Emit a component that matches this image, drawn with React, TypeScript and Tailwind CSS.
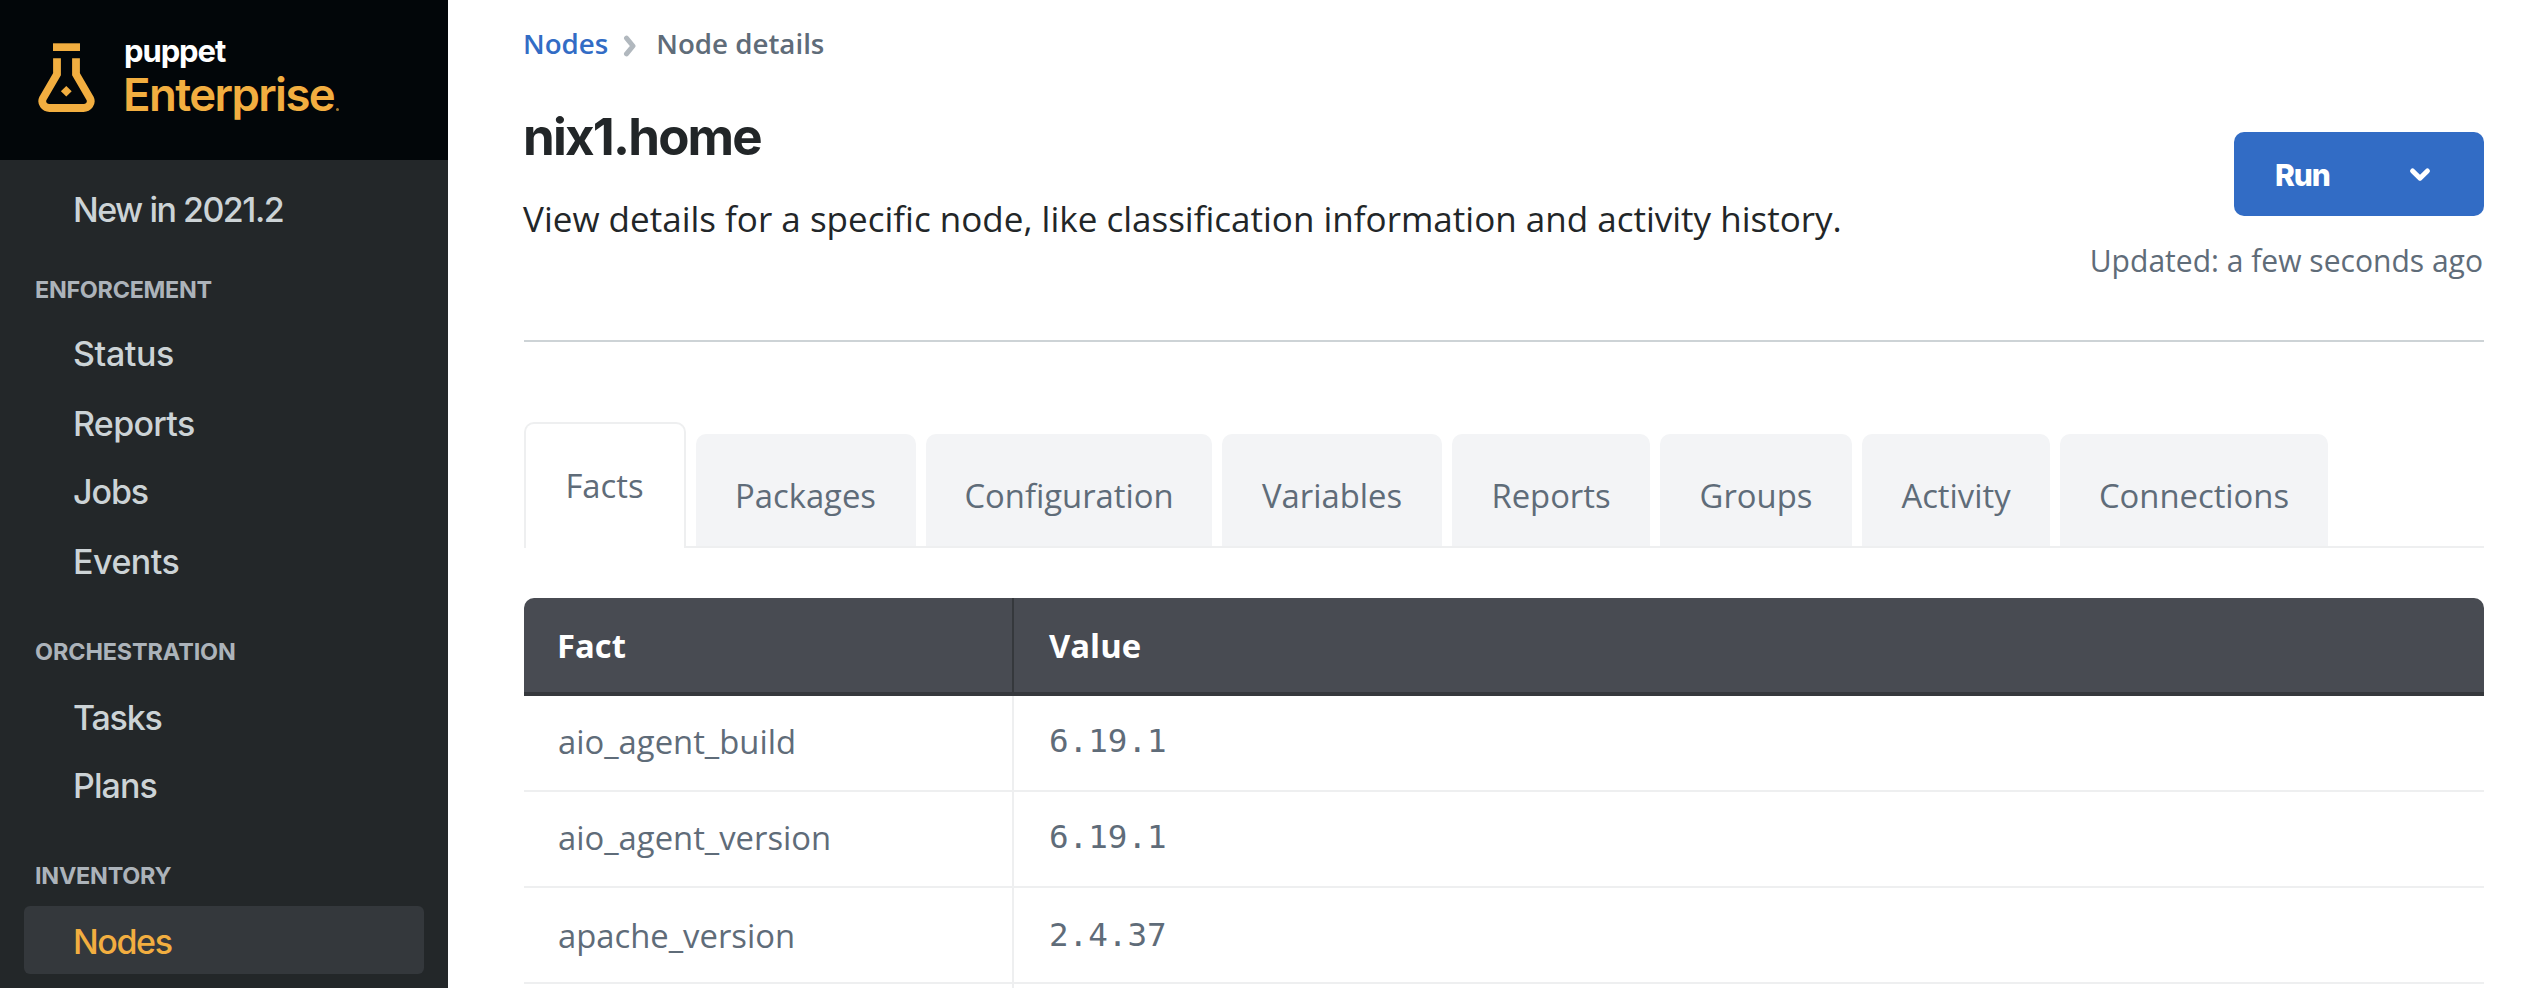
type NavItem = { label: string; className?: string; active?: boolean };
type NavGroup = { title: string; className: string; titleClass: string; items: NavItem[] };

const groups: NavGroup[] = [
  {
    title: "ENFORCEMENT",
    className: "mt-[33px]",
    titleClass: "mb-[13px] tracking-[-0.3px]",
    items: [
      { label: "Status", className: "mb-0.5 tracking-[-0.4px]" },
      { label: "Reports", className: "tracking-[-0.7px]" },
      { label: "Jobs", className: "mb-0.5 tracking-[-1.1px]" },
      { label: "Events", className: "tracking-[-0.5px]" },
    ],
  },
  {
    title: "ORCHESTRATION",
    className: "mt-[43px]",
    titleClass: "mb-[15px] tracking-[-0.1px]",
    items: [
      { label: "Tasks", className: "tracking-[-1.2px]" },
      { label: "Plans", className: "tracking-[-0.9px]" },
    ],
  },
  {
    title: "INVENTORY",
    className: "mt-[43px]",
    titleClass: "mb-[15px] tracking-[-0.25px]",
    items: [{ label: "Nodes", className: "tracking-[-1.4px]", active: true }],
  },
];

const tabs = [
  { label: "Packages", className: "w-[220px] pr-px" },
  { label: "Configuration", className: "w-[286px]" },
  { label: "Variables", className: "w-[220px]" },
  { label: "Reports", className: "w-[198px]" },
  { label: "Groups", className: "w-[192px]" },
  { label: "Activity", className: "w-[188px]" },
  { label: "Connections", className: "w-[268px]" },
];

const facts = [
  { name: "aio_agent_build", value: "6.19.1", className: "" },
  { name: "aio_agent_version", value: "6.19.1", className: "" },
  { name: "apache_version", value: "2.4.37", className: "pt-0.5" },
];

function FlaskLogo() {
  return (
    <svg viewBox="38 43 58 70" className="h-[70px] w-[58px]" fill="none">
      <path d="M53 43.3H80V51H53Z" fill="#f2ae40" />
      <path
        d="M57 58.2V74.3L43 98.2C40.6 103.3 44.6 108 49.5 108H83.5C88.4 108 92.4 103.3 90 98.2L76 74.3V58.2"
        stroke="#f2ae40"
        strokeWidth="7.8"
      />
      <path d="M66.3 86L71.7 91.3L66.3 96.6L60.9 91.3Z" fill="#f2ae40" />
    </svg>
  );
}

function NavLink({ label, className = "", active }: NavItem) {
  return (
    <a
      className={`block h-[68px] rounded-md pl-[49px] text-[34px] leading-[71px] font-medium ${
        active ? "bg-[#34383c] text-[#f2ae40]" : "text-[#ccd3d6]"
      } ${className}`}
    >
      {label}
    </a>
  );
}

function Sidebar() {
  return (
    <aside className="w-[448px] shrink-0 bg-[#232729] font-['Inter',sans-serif]">
      <div className="flex h-40 bg-[#020609] pl-[38px]">
        <div className="pt-[43px]">
          <FlaskLogo />
        </div>
        <div className="ml-7 pt-8">
          <div className="text-[31px] leading-[38px] font-bold tracking-[-1.1px] text-white">puppet</div>
          <div className="-ml-px flex text-[45.5px] leading-[50px] font-semibold tracking-[-1.6px] text-[#f2ae40]">
            Enterprise
            <span className="mt-[38px] ml-0.5 size-[3px] rounded-full bg-[#a87a30]" />
          </div>
        </div>
      </div>
      <nav className="px-6 pt-3.5">
        <NavLink label="New in 2021.2" className="tracking-[-1.5px]" />
        {groups.map((g) => (
          <div key={g.title} className={g.className}>
            <div className={`h-[30px] pl-[11px] text-[23.4px] leading-[30px] font-bold text-[#acb3ba] ${g.titleClass}`}>
              {g.title}
            </div>
            {g.items.map((i) => (
              <NavLink key={i.label} {...i} />
            ))}
          </div>
        ))}
      </nav>
    </aside>
  );
}

function PageHeader() {
  return (
    <header className="flex h-[280px] justify-between border-b-2 border-[#cdd3d6]">
      <div>
        <h1 className="-ml-px mt-[45px] font-['Inter',sans-serif] text-[51px] leading-[60px] font-bold tracking-[-1.8px] text-[#222628]">
          nix1.home
        </h1>
        <p className="-ml-px mt-7 text-[35.03px] leading-[48px] text-[#222628]">
          View details for a specific node, like classification information and activity history.
        </p>
      </div>
      <div className="flex flex-col items-end pt-[70px]">
        <button className="flex h-[84px] w-[250px] items-center justify-between rounded-[10px] bg-[#326cc5] pr-[52px] pl-[41px] font-['Inter',sans-serif] text-[30px] font-extrabold tracking-[-1.1px] text-white">
          <span className="pt-[3px]">Run</span>
          <svg viewBox="0 0 24 16" className="h-4 w-6" fill="none" stroke="currentColor" strokeWidth="5" strokeLinecap="round" strokeLinejoin="round">
            <path d="M4.6 5L12 12.2L19.4 5" />
          </svg>
        </button>
        <div className="mt-[25px] mr-px text-[30.05px] leading-10 text-[#5f6c79]">Updated: a few seconds ago</div>
      </div>
    </header>
  );
}

export default function App() {
  return (
    <div className="flex h-[988px] w-[2536px] overflow-hidden bg-white font-['Open_Sans',sans-serif]">
      <Sidebar />
      <main className="w-[2036px] pt-6 pl-[76px] text-[#5f6c79]">
        <div className="-ml-px flex h-[38px] items-center text-[27.7px] leading-[38px] font-semibold">
          <a className="text-[#326cc5]">Nodes</a>
          <svg viewBox="0 0 14 22" className="mt-1.5 ml-[15px] h-[22px] w-3.5" fill="none" stroke="#b1b8be" strokeWidth="5" strokeLinecap="round" strokeLinejoin="round">
            <path d="M3.5 3.2L10 11L3.5 18.8" />
          </svg>
          <span className="ml-[19px]">Node details</span>
        </div>
        <PageHeader />

        <div className="mt-20 flex h-[126px] items-end gap-2.5 text-[32.8px]">
          <div className="flex h-[126px] w-[162px] justify-center rounded-t-[10px] border-2 border-b-0 border-[#eeeff0] pr-px leading-[124px]">
            Facts
          </div>
          <div className="-ml-2.5 flex h-full flex-1 items-end gap-2.5 border-b-2 border-[#eeeff0] pl-2.5">
            {tabs.map((t) => (
              <div key={t.label} className={`flex h-28 justify-center rounded-t-[10px] bg-[#f3f4f6] leading-[124px] ${t.className}`}>
                {t.label}
              </div>
            ))}
          </div>
        </div>

        <div className="mt-[50px] text-[32.8px]">
          <div className="flex h-[98px] rounded-t-[10px] border-b-4 border-[#35383c] bg-[#484b52] leading-[96px] font-bold text-white">
            <div className="w-[490px] border-r-2 border-[#35383c] pl-[33px]">Fact</div>
            <div className="pl-[35px]">Value</div>
          </div>
          {facts.map((f) => (
            <div key={f.name} className="flex h-24 border-b-2 border-[#eeeff0]">
              <div className={`w-[490px] border-r-2 border-[#eeeff0] pl-[34px] leading-[92px] ${f.className}`}>{f.name}</div>
              <div className={`pl-[35px] font-['DejaVu_Sans_Mono',monospace] text-[32.6px] leading-[91px] ${f.className}`}>{f.value}</div>
            </div>
          ))}
          <div className="h-1 w-[490px] border-r-2 border-[#eeeff0]" />
        </div>
      </main>
    </div>
  );
}
